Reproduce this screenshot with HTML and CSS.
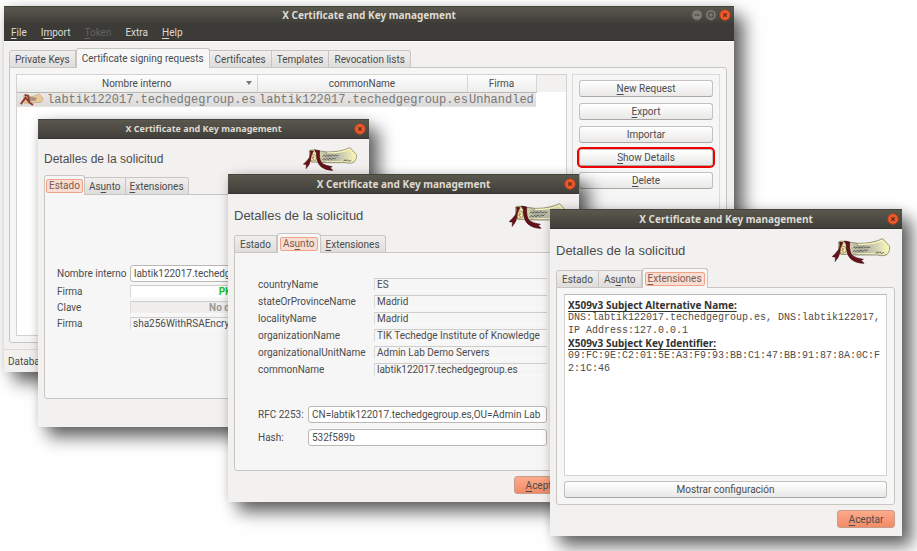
FILE: index.html
```html
<!DOCTYPE html>
<html lang="es">
<head>
<meta charset="utf-8">
<title>X Certificate and Key management</title>
<link rel="stylesheet" href="styles.css">
</head>
<body>
<svg width="0" height="0" class="defs" aria-hidden="true">
  <defs>
    <linearGradient id="paper" x1="0" x2="1" y1="0" y2="0">
      <stop offset="0" stop-color="#f5efba"/><stop offset=".22" stop-color="#d8d5ad"/>
      <stop offset=".4" stop-color="#a9ab9d"/><stop offset=".62" stop-color="#bfc1ac"/>
      <stop offset=".84" stop-color="#e4e2b6"/><stop offset="1" stop-color="#fff9bc"/>
    </linearGradient>
    <symbol id="scroll" viewBox="36 30 178 78">
      <path d="M58 42Q66 37 78 41L116 46Q158 47 190 32L211 55Q213 68 204 79Q194 86 174 81L116 81Q88 80 64 79Q56 60 58 42Z" fill="url(#paper)" stroke="#706d50" stroke-width="2"/>
      <path d="M116 49Q164 50 188 37L203 55" fill="none" stroke="#faf5b5" stroke-width="4"/>
      <path d="M112 77L174 77Q194 81 202 72" fill="none" stroke="#f5efb5" stroke-width="3"/>
      <circle cx="70" cy="65" r="11" fill="#f4e8ab" stroke="#8b6d43" stroke-width="2"/>
      <path d="M67 59l6 4-6 4 6 4" fill="none" stroke="#5c4932" stroke-width="2"/>
      <path d="M60 42Q63 50 58 64Q50 76 38 86L48 88L47 101Q60 88 62 73Q63 55 72 43Z" fill="#65131a" stroke="#3e080d"/>
      <path d="M75 39L91 42Q89 71 98 82Q109 91 132 94L125 97L134 106Q111 106 95 93Q81 80 81 50Z" fill="#65131a" stroke="#3e080d" stroke-width="2"/>
      <path d="M101 61l5-5 3 5 5-5 4 4 5-3 5 3 5-4 5 3 6-2 5 2 4-2M100 73l5-6 4 5 5-5 5 4 6-5 5 5 5-5 5 3 5-5M169 77l5-6 3 5 5-5 4 6 8-4" fill="none" stroke="#37382f" stroke-width="2"/>
    </symbol>
    <symbol id="scroll-small" viewBox="0 0 26 14">
      <path d="M4 3L13 4L21 1L25 6L23 10L5 11Z" fill="#e8c99b" stroke="#d2b18c"/>
      <path d="M9 5l9 1M9 8l8-1" stroke="#a78f7d" stroke-width="2"/>
      <path d="M1 12L6 5L10 10L14 13M5 2L9 3L10 10" fill="none" stroke="#8e3b2c" stroke-width="2"/>
    </symbol>
    <symbol id="close" viewBox="0 0 12 12">
      <circle cx="6" cy="6" r="5.2" fill="#ee5c2d" stroke="#b8411e"/>
      <path d="M4.2 4.2l3.6 3.6M7.8 4.2L4.2 7.8" stroke="#69301c" stroke-width="1.3"/>
    </symbol>
    <symbol id="minimize" viewBox="0 0 12 12">
      <circle cx="6" cy="6" r="5.2" fill="#7c7b74" stroke="#5c5b54"/><path d="M3.5 6h5" stroke="#3d3c38"/>
    </symbol>
    <symbol id="maximize" viewBox="0 0 12 12">
      <circle cx="6" cy="6" r="5.2" fill="#7c7b74" stroke="#5c5b54"/><path d="M3.8 3.8h4.4v4.4H3.8z" fill="none" stroke="#3d3c38"/>
    </symbol>
  </defs>
</svg>

<main class="desktop">
  <section class="window window-main" aria-label="X Certificate and Key management">
    <header class="titlebar titlebar-main">
      <h1>X Certificate and Key management</h1>
      <div class="controls">
        <button aria-label="Minimize"><svg><use href="#minimize"/></svg></button>
        <button aria-label="Maximize"><svg><use href="#maximize"/></svg></button>
        <button aria-label="Close"><svg><use href="#close"/></svg></button>
      </div>
    </header>
    <nav class="menubar">
      <button><u>F</u>ile</button>
      <button>I<u>m</u>port</button>
      <button disabled><u>T</u>oken</button>
      <button>Extra</button>
      <button><u>H</u>elp</button>
    </nav>
    <div class="workspace">
      <div class="tabs" role="tablist">
        <button role="tab">Private Keys</button>
        <button role="tab" aria-selected="true">Certificate signing requests</button>
        <button role="tab">Certificates</button>
        <button role="tab">Templates</button>
        <button role="tab">Revocation lists</button>
      </div>
      <div class="pane requests">
        <div class="list">
          <table>
            <colgroup><col class="col-name"><col class="col-common"><col class="col-sign"><col></colgroup>
            <thead><tr><th class="sorted">Nombre interno</th><th>commonName</th><th>Firma</th><td></td></tr></thead>
            <tbody><tr>
              <td><div class="entry"><svg><use href="#scroll-small"/></svg>labtik122017.techedgegroup.es</div></td>
              <td>labtik122017.techedgegroup.es</td><td>Unhandled</td><td class="rest"></td>
            </tr></tbody>
          </table>
        </div>
        <div class="actions">
          <button class="btn"><u>N</u>ew Request</button>
          <button class="btn"><u>E</u>xport</button>
          <button class="btn">Importar</button>
          <button class="btn marked"><u>S</u>how Details</button>
          <button class="btn"><u>D</u>elete</button>
        </div>
      </div>
    </div>
    <footer class="status">Database</footer>
  </section>

  <section class="window dialog dialog-state" aria-label="Estado">
    <header class="titlebar">
      <h1>X Certificate and Key management</h1>
      <div class="controls"><button aria-label="Close"><svg><use href="#close"/></svg></button></div>
    </header>
    <div class="banner"><h2>Detalles de la solicitud</h2><svg><use href="#scroll"/></svg></div>
    <div class="tabs" role="tablist">
      <button role="tab" aria-selected="true"><span>Estado</span></button>
      <button role="tab">As<u>u</u>nto</button>
      <button role="tab"><u>E</u>xtensiones</button>
    </div>
    <div class="pane state">
      <div class="state-grid">
        <label for="name">Nombre interno</label><input id="name" value="labtik122017.techedgegroup.es">
        <span>Firma</span><output class="good">PKCS#10</output>
        <span>Clave</span><output class="missing">No disponible</output>
        <span>Firma</span><output>sha256WithRSAEncryption</output>
      </div>
    </div>
  </section>

  <section class="window dialog dialog-subject" aria-label="Asunto">
    <header class="titlebar">
      <h1>X Certificate and Key management</h1>
      <div class="controls"><button aria-label="Close"><svg><use href="#close"/></svg></button></div>
    </header>
    <div class="banner"><h2>Detalles de la solicitud</h2><svg><use href="#scroll"/></svg></div>
    <div class="tabs" role="tablist">
      <button role="tab">Estado</button>
      <button role="tab" aria-selected="true"><span>As<u>u</u>nto</span></button>
      <button role="tab"><u>E</u>xtensiones</button>
    </div>
    <div class="pane subject">
      <dl>
        <dt>countryName</dt><dd>ES</dd>
        <dt>stateOrProvinceName</dt><dd>Madrid</dd>
        <dt>localityName</dt><dd>Madrid</dd>
        <dt>organizationName</dt><dd>TIK Techedge Institute of Knowledge</dd>
        <dt>organizationalUnitName</dt><dd>Admin Lab Demo Servers</dd>
        <dt>commonName</dt><dd>labtik122017.techedgegroup.es</dd>
      </dl>
      <div class="digest">
        <label for="rfc">RFC 2253:</label><input id="rfc" value="CN=labtik122017.techedgegroup.es,OU=Admin Lab">
        <label for="hash">Hash:</label><input id="hash" value="532f589b">
      </div>
    </div>
    <div class="buttons"><button class="btn accept"><u>A</u>ceptar</button></div>
  </section>

  <section class="window dialog dialog-extensions" aria-label="Extensiones">
    <header class="titlebar">
      <h1>X Certificate and Key management</h1>
      <div class="controls"><button aria-label="Close"><svg><use href="#close"/></svg></button></div>
    </header>
    <div class="banner"><h2>Detalles de la solicitud</h2><svg><use href="#scroll"/></svg></div>
    <div class="tabs" role="tablist">
      <button role="tab">Estado</button>
      <button role="tab">As<u>u</u>nto</button>
      <button role="tab" aria-selected="true"><span><u>E</u>xtensiones</span></button>
    </div>
    <div class="pane extensions">
      <div class="document">
        <h3>X509v3 Subject Alternative Name:</h3>
        <p>DNS:labtik122017.techedgegroup.es, DNS:labtik122017, IP Address:127.0.0.1</p>
        <h3>X509v3 Subject Key Identifier:</h3>
        <p class="key">09:FC:9E:C2:01:5E:A3:F9:93:BB:C1:47:BB:91:87:8A:0C:F2:1C:46</p>
      </div>
      <button class="btn">Mostrar configuración</button>
    </div>
    <div class="buttons"><button class="btn accept"><u>A</u>ceptar</button></div>
  </section>
</main>
</body>
</html>
```
FILE: styles.css
```css
* { box-sizing: border-box; }

body {
  margin: 0;
  background: #fff;
  color: #4c4c4c;
  font: 10px/12px Roboto, "Noto Sans", sans-serif;
}

button, input { font: inherit; color: inherit; margin: 0; }
button { padding: 0; border: 0; background: none; }
h1, h2, h3, p, dl, dd { margin: 0; }
u { text-underline-offset: 2px; }
.defs { position: absolute; }

.desktop { position: relative; min-height: 100vh; overflow: hidden; }

/* Windows */
.window {
  position: absolute;
  display: flex;
  flex-direction: column;
  background: #f2f1f0;
  box-shadow: 10px 10px 16px rgba(0, 0, 0, .6), 0 0 10px rgba(0, 0, 0, .12);
}
.window-main { left: 4px; top: 6px; width: 730px; min-height: 366px; }
.dialog { padding-bottom: 8px; }
.dialog-state { left: 38px; top: 119px; width: 331px; min-height: 308px; }
.dialog-subject { left: 228px; top: 174px; width: 351px; }
.dialog-extensions { left: 550px; top: 209px; width: 352px; }

.titlebar {
  display: flex;
  align-items: center;
  height: 20px;
  padding: 0 3px;
  background: linear-gradient(#5a574d, #403f3a);
  border-top: 1px solid #45433c;
  border-bottom: 1px solid #353430;
  color: #dfdbd2;
}
.titlebar::before { content: ""; flex: 1; }
.titlebar h1 { font: bold 10px/12px "Noto Sans", sans-serif; }
.dialog-state .titlebar h1 { font-size: 9px; }
.titlebar-main { height: 17px; border-bottom: 0; background: linear-gradient(#5a574d, #3f3e39); }
.controls { flex: 1; display: flex; justify-content: flex-end; gap: 2px; }
.controls svg { display: block; width: 12px; height: 12px; }

.menubar {
  display: flex;
  gap: 14px;
  height: 18px;
  padding: 2px 7px 0;
  background: #3c3b37;
  border-bottom: 1px solid #2f2e2b;
  color: #dfdbd2;
}
.menubar button:disabled { color: #65635c; }

/* Tabs */
.tabs { display: flex; align-items: flex-end; padding: 0 6px; height: 20px; margin-bottom: -1px; }
.tabs button {
  height: 18px;
  padding: 1px 5px 0;
  border: 1px solid #c9c6c2;
  border-left-width: 0;
  background: linear-gradient(#f0efee, #dfdddb);
}
.dialog-state .tabs button { padding: 1px 4px 0; }
.tabs button:first-child { border-left-width: 1px; border-top-left-radius: 3px; }
.tabs button:last-child { border-top-right-radius: 3px; }
.tabs button[aria-selected] {
  position: relative;
  height: 20px;
  border-left-width: 1px;
  border-bottom: 0;
  border-radius: 3px 3px 0 0;
  background: #f7f7f7;
}
.tabs span {
  display: block;
  margin: 0 -3px;
  padding: 0 2px;
  border: 1px solid #f0a386;
  border-radius: 2px;
  background: #f8ddd2;
  color: #7b5b50;
}
.pane { border: 1px solid #c9c6c2; border-radius: 0 3px 3px 3px; background: #f6f6f6; }

/* Main window */
.workspace { flex: 1; display: flex; flex-direction: column; padding: 6px 7px 6px 5px; border-top: 1px solid #fff; }
.workspace .tabs { padding: 0; }
.requests { flex: 1; display: flex; gap: 5px; padding: 6px; }
.list { flex: 1; border: 1px solid #d4d2cf; background: #fff; }
.list table { width: 100%; table-layout: fixed; border-collapse: collapse; }
.col-name { width: 240px; }
.col-common { width: 210px; }
.col-sign { width: 69px; }
.list th, .list td { padding: 0 2px; height: 17px; white-space: nowrap; }
.list th {
  padding-top: 1px;
  font-weight: normal;
  background: linear-gradient(#fdfdfd, #ededec);
  border-right: 1px solid #d8d6d4;
  border-bottom: 1px solid #b9b6b2;
}
.list thead td { background: #f2f1f0; }
.sorted { position: relative; }
.sorted::after {
  content: "";
  position: absolute;
  right: 5px;
  top: 6px;
  border: 3px solid transparent;
  border-top: 4px solid #777;
  border-bottom: 0;
}
.list tbody td {
  height: 15px;
  background: linear-gradient(#ebe9e8, #dcdad8);
  color: #777;
  font: 12px/14px "Liberation Mono", monospace;
}
.list tbody .rest { background: none; }
.entry { display: flex; align-items: center; gap: 2px; }
.entry svg { width: 26px; height: 13px; flex: none; }
.actions { display: flex; flex-direction: column; gap: 6px; width: 148px; padding: 5px 6px; border: 1px solid #dddbd9; }
.status { height: 23px; padding: 6px 4px 0; border-top: 1px solid #dddbd9; }

.btn {
  height: 17px;
  padding-top: 1px;
  border: 1px solid #c3c0bd;
  border-bottom-color: #aaa8a5;
  border-radius: 3px;
  background: linear-gradient(#fff, #e9e8e7);
}
.marked { outline: 2px solid #f20000; }
.accept {
  width: 58px;
  height: 18px;
  border-color: #c99c89;
  background: linear-gradient(#fcab8c, #f28b66);
}

/* Dialogs */
.banner { display: flex; align-items: center; justify-content: space-between; height: 39px; padding: 4px 11px 0 6px; }
.banner h2 { font: 13px/16px "Liberation Sans", sans-serif; }
.banner svg { width: 60px; height: 26px; }
.dialog .pane { margin: 0 7px 0 6px; }
.buttons { display: flex; justify-content: flex-end; padding: 5px 7px 0; }

input {
  min-width: 0;
  width: 100%;
  height: 17px;
  padding: 0 3px;
  border: 1px solid #bbb8b4;
  border-radius: 3px;
  background: #fff;
}
output, dd {
  height: 13px;
  padding: 0 2px;
  border: 1px solid #dcdad8;
  border-top-color: #cfcdca;
  border-right: 0;
  border-bottom-color: #fafafa;
  line-height: 12px;
  white-space: nowrap;
}
dt { padding-top: 1px; line-height: 12px; }

.dialog-state .banner { height: 36px; }
.dialog-state .banner h2 { font-size: 12px; }
.dialog-state .banner svg { width: 56px; height: 24px; }
.state { min-height: 205px; padding: 70px 12px 0 12px; }
.state-grid { display: grid; grid-template-columns: 73px 1fr; row-gap: 3px; align-items: center; white-space: nowrap; }
.good { background: #fff; color: #1fc41f; font-weight: bold; text-align: center; }
.missing { background: #efeeed; color: #999; font-weight: bold; text-align: center; }

.subject { min-height: 219px; padding: 25px 24px 23px 23px; }
.subject dl { display: grid; grid-template-columns: 116px minmax(0, 1fr); row-gap: 4px; margin-bottom: 30px; }
.digest { display: grid; grid-template-columns: 50px 1fr; row-gap: 6px; align-items: center; }

.extensions { display: flex; flex-direction: column; gap: 5px; padding: 6px 7px; }
.document { min-height: 182px; padding: 4px 3px; border: 1px solid #d4d2cf; border-top-color: #bbb8b4; background: #fff; }
.document h3 { font: bold 10px/12px "Noto Sans", sans-serif; text-decoration: underline; text-underline-offset: 2px; color: #333; }
.document p { font: 10px/13px "Liberation Mono", monospace; }
.key { word-break: break-all; }
```
